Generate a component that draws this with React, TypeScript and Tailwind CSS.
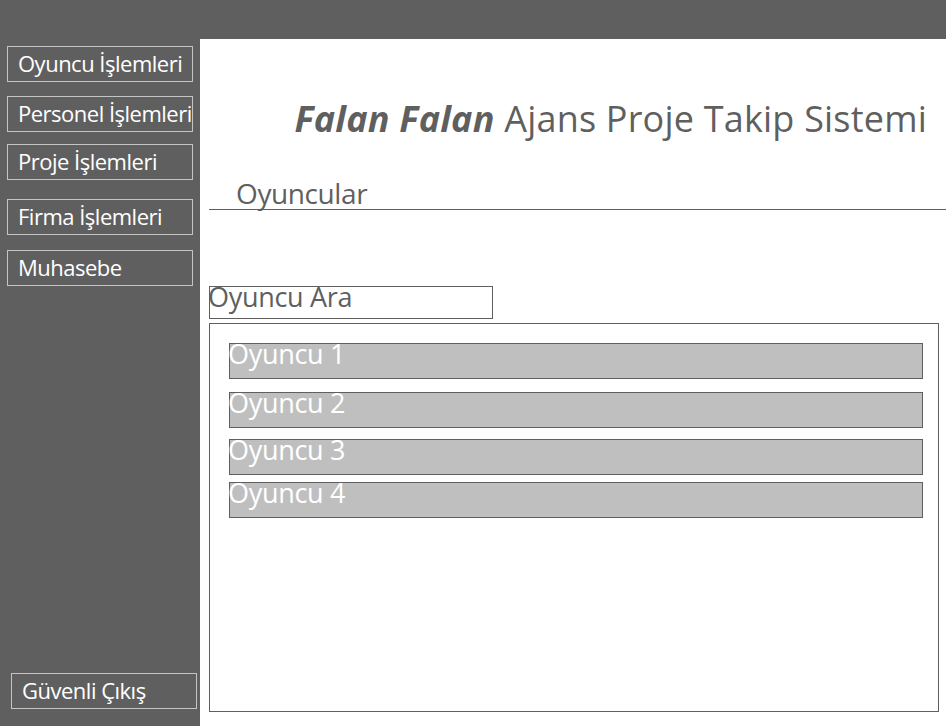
const font = { fontFamily: '"Open Sans", "Noto Sans", sans-serif' };

function NavButton({ label, className }: { label: string; className: string }) {
  return (
    <div
      className={`w-[186px] h-[36px] border border-[#c4c4c4] text-white text-[22px] leading-none flex items-center pl-[10px] tracking-[-0.5px] ${className}`}
    >
      <span className="-mt-[2px]">{label}</span>
    </div>
  );
}

const players = [
  { name: "Oyuncu 1", mt: "mt-[19px]" },
  { name: "Oyuncu 2", mt: "mt-[13px]" },
  { name: "Oyuncu 3", mt: "mt-[11px]" },
  { name: "Oyuncu 4", mt: "mt-[7px]" },
];

export default function App() {
  return (
    <div className="w-[946px] h-[726px] bg-[#5f5f5f] flex flex-col overflow-hidden" style={font}>
      <div className="h-[39px] shrink-0" />
      <div className="flex flex-1 min-h-0">
        <aside className="w-[200px] shrink-0 flex flex-col pt-[7px]">
          <NavButton label="Oyuncu İşlemleri" className="ml-[7px]" />
          <NavButton label="Personel İşlemleri" className="ml-[7px] mt-[14px]" />
          <NavButton label="Proje İşlemleri" className="ml-[7px] mt-[12px]" />
          <NavButton label="Firma İşlemleri" className="ml-[7px] mt-[19px]" />
          <NavButton label="Muhasebe" className="ml-[7px] mt-[15px]" />
          <NavButton label="Güvenli Çıkış" className="ml-[11px] mt-auto mb-[17px]" />
        </aside>

        <main className="flex-1 bg-white flex flex-col pl-[9px] pb-[14px]">
          <div className="h-[98px] flex items-end justify-end pr-[19px]">
            <h1 className="text-[36px] leading-none text-[#5f5f5f] tracking-[0.2px]">
              <span className="font-bold italic">Falan Falan</span> Ajans Proje Takip Sistemi
            </h1>
          </div>
          <div className="border-b border-[#5f5f5f] h-[73px] flex items-end pb-[2px]">
            <span className="ml-[27px] text-[28px] leading-none text-[#5f5f5f] tracking-[-0.4px]">Oyuncular</span>
          </div>

          <div className="mt-[76px] w-[284px] h-[33px] border border-[#5f5f5f] flex items-start">
            <span className="text-[27px] leading-none text-[#5f5f5f] tracking-[-0.3px] -mt-[4px] -ml-[2px]">Oyuncu Ara</span>
          </div>

          <div className="mt-[4px] w-[730px] flex-1 border border-[#5f5f5f] flex flex-col pl-[19px] pr-[15px]">
            {players.map((p) => (
              <div
                key={p.name}
                className={`${p.mt} h-[36px] bg-[#bfbfbf] border border-[#5f5f5f] flex items-start`}
              >
                <span className="text-white text-[27px] leading-none tracking-[-0.3px] -mt-[4px] -ml-[2px]">{p.name}</span>
              </div>
            ))}
          </div>
        </main>
      </div>
    </div>
  );
}
